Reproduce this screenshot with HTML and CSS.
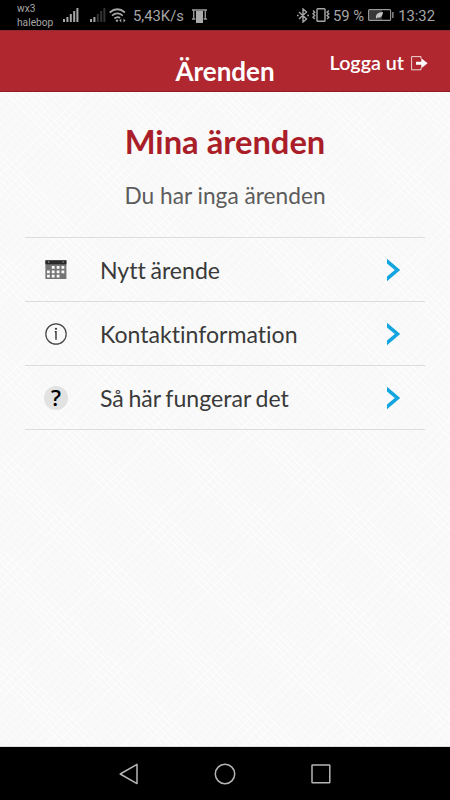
FILE: index.html
```
<!DOCTYPE html>
<html lang="sv">
<head>
    <meta charset="UTF-8" />
    <meta name="viewport" content="width=device-width, initial-scale=1" />
    <title>Ärenden</title>
    <link rel="stylesheet" href="styles.css">
</head>
<body>

<div class="statusbar">
    <div class="carrier">wx3<br>halebop</div>
    <svg class="signal" width="16" height="14" viewBox="0 0 16 14" fill="#a6a6a6">
        <path d="M0 11h2v3H0zM3.4 9h2v5h-2zM6.8 6h2v8h-2zM10.2 3h2v11h-2zM13.4 0h2v14h-2z" />
    </svg>
    <svg class="signal second" width="16" height="14" viewBox="0 0 16 14" fill="#333">
        <path fill="#a6a6a6" d="M0 11h2v3H0zM3.4 9h2v5h-2z" />
        <path d="M6.8 6h2v8h-2zM10.2 3h2v11h-2zM13.4 0h2v14h-2z" />
    </svg>
    <svg class="wifi" width="17" height="15" viewBox="0 0 17 15" fill="none" stroke="#a6a6a6" stroke-width="1.7">
        <path d="M.7 4.5Q8.3-2 16 4.5M3 7.6q5.3-4.4 10.8 0M5.4 10.5q3-2.5 5.8-.5" />
        <circle cx="8" cy="12.6" r="1.2" fill="#a6a6a6" stroke="none" />
        <path stroke="none" fill="#a6a6a6" d="M10.3 12.5l2-2v4zM16.5 12.5l-2-2v4z" />
    </svg>
    <span class="speed">5,43K/s</span>
    <svg class="cleaner" width="15" height="14" viewBox="0 0 15 14">
        <path d="M0 0h15v2H0z" fill="#777" />
        <path d="M1.7 1v9M0 10h3.4M13.3 1v9M11.6 10H15" fill="none" stroke="#969696" stroke-width="1.4" />
        <path d="M4 2h7v12H4z" fill="#aaa" />
    </svg>
    <div class="status-right">
        <svg class="bluetooth" width="12" height="15" viewBox="0 0 12 15" fill="none" stroke="#a6a6a6" stroke-width="1.4">
            <path d="M2 4l7.5 7L6 14V1l3.5 3L2 11M0 7.5h1.7M10.3 7.5H12" />
        </svg>
        <svg class="vibrate" width="18" height="14" viewBox="0 0 18 14" fill="none" stroke="#a6a6a6" stroke-width="1.4">
            <rect x="5" y=".7" width="8" height="12.6" rx=".8" />
            <path d="M1 2.5l1.7 1.7L1 5.8l1.7 1.7L1 9.2l1.7 1.7M16.8 2.5l-1.7 1.7 1.7 1.6-1.7 1.7 1.7 1.7-1.7 1.7" />
        </svg>
        <span class="percent">59 %</span>
        <svg class="battery" width="26" height="12" viewBox="0 0 26 12">
            <rect x="1" y="1.2" width="13" height="9.6" fill="#383838" />
            <rect x=".6" y=".6" width="22" height="10.8" rx="1" fill="none" stroke="#999" stroke-width="1.1" />
            <path d="M24.2 3h1.3v6h-1.3z" fill="#999" />
            <path d="M8 9c-.4-4 2-5.5 7-6-.2 4-2.4 6.3-5.5 5.5L8 9.7z" fill="#c4c4c4" />
        </svg>
        <span class="clock">13:32</span>
    </div>
</div>

<header class="header">
    <h1>Ärenden</h1>
    <a class="logout">Logga ut
        <svg width="17" height="15" viewBox="0 0 17 15">
            <path d="M10 .6H.6v13.2H10v-2M10 .6v2" fill="none" stroke="#fff" stroke-opacity=".8" />
            <path d="M5 5.7h5.3V2.2L16.6 7.3l-6.3 5V8.8H5z" fill="#fff" />
        </svg>
    </a>
</header>

<main class="content">
    <h2>Mina ärenden</h2>
    <p class="empty">Du har inga ärenden</p>

    <ul class="menu">
        <li>
            <svg class="icon" width="24" height="24" viewBox="0 0 24 24">
                <path d="M1.4 2.3h21v18.7h-21z" fill="#757575" />
                <path d="M1.4 2.3h21v4h-21z" fill="#292929" />
                <path d="M4 3.6h1.3v1H4zM18.5 3.6h1.3v1h-1.3z" fill="#bbb" />
                <path d="M7.8 8h2.8v2.8H7.8zM12.7 8h2.8v2.8h-2.8zM17.5 8h2.8v2.8h-2.8zM3 12.4h2.8v2.8H3zM7.8 12.4h2.8v2.8H7.8zM12.7 12.4h2.8v2.8h-2.8zM17.5 12.4h2.8v2.8h-2.8zM3 16.7h2.8v2.8H3zM7.8 16.7h2.8v2.8H7.8zM12.7 16.7h2.8v2.8h-2.8z" fill="#fafafa" />
            </svg>
            <span class="label">Nytt ärende</span>
            <svg class="arrow" width="14" height="24" viewBox="0 0 14 24"><path d="M0 .8L13.2 12 0 23.2v-4.6L7.8 12 0 5.4z" /></svg>
        </li>
        <li>
            <svg class="icon" width="24" height="24" viewBox="0 0 24 24">
                <circle cx="12" cy="12" r="10.2" fill="none" stroke="#444" stroke-width="1.2" />
                <circle cx="12" cy="6.8" r="1.1" fill="#333" />
                <path d="M10.8 9.7H12v8" fill="none" stroke="#333" stroke-width="1.4" />
            </svg>
            <span class="label">Kontaktinformation</span>
            <svg class="arrow" width="14" height="24" viewBox="0 0 14 24"><path d="M0 .8L13.2 12 0 23.2v-4.6L7.8 12 0 5.4z" /></svg>
        </li>
        <li>
            <span class="icon help">?</span>
            <span class="label">Så här fungerar det</span>
            <svg class="arrow" width="14" height="24" viewBox="0 0 14 24"><path d="M0 .8L13.2 12 0 23.2v-4.6L7.8 12 0 5.4z" /></svg>
        </li>
    </ul>
</main>

<nav class="navbar">
    <svg width="22" height="22" viewBox="0 0 22 22"><path d="M19 1.4v19.2L2.2 11z" /></svg>
    <svg width="22" height="22" viewBox="0 0 22 22"><circle cx="11" cy="11" r="9.7" /></svg>
    <svg width="22" height="22" viewBox="0 0 22 22"><rect x="2" y="2" width="17.8" height="17.8" rx=".5" /></svg>
</nav>

</body>
</html>
```

FILE: styles.css
```
* {
    box-sizing: border-box;
}
body {
    margin: 0;
    height: 800px;
    display: flex;
    flex-direction: column;
    overflow: hidden;
    font-family: Lato, sans-serif;
    font-variant-ligatures: none;
    background: #000;
    color: #3a3a3a;
}
svg {
    display: block;
    flex: none;
}
.statusbar {
    height: 30px;
    display: flex;
    align-items: center;
    padding: 0 15px 0 17px;
    font-family: Roboto, sans-serif;
    font-size: 14.8px;
    color: #a6a6a6;
    white-space: nowrap;
}
.carrier {
    width: 46px;
    padding-top: 1px;
    font-size: 10.2px;
    line-height: 14px;
}
.second {
    margin-left: 11px;
}
.wifi {
    margin-left: 3px;
}
.speed {
    margin-left: 7px;
    padding-top: 2px;
}
.cleaner {
    margin: 2px 0 0 8px;
}
.status-right {
    margin-left: auto;
    display: flex;
    align-items: center;
}
.vibrate {
    margin-left: 3px;
}
.percent {
    margin-left: 3px;
    padding-top: 2px;
}
.battery {
    margin-left: 4px;
}
.clock {
    margin-left: 4px;
    padding-top: 2px;
}
.header {
    position: relative;
    height: 62px;
    background: #b0272f;
    border-top: 1px solid #8e2a30;
    border-bottom: 1px solid #8f1d25;
    color: #fff;
}
h1 {
    margin: 0;
    padding-top: 24px;
    font-size: 26px;
    line-height: 32px;
    text-align: center;
}
.logout {
    position: absolute;
    top: 20px;
    right: 22px;
    display: flex;
    align-items: center;
    gap: 7px;
    font-size: 19.7px;
    font-weight: 600;
    line-height: 24px;
}
.content {
    flex: 1;
    padding: 29px 25px 0;
    border-bottom: 1px solid #ddd;
    background-color: #f8f8f8;
    background-image:
        repeating-linear-gradient(45deg, rgba(255, 255, 255, 0.5) 0 1px, transparent 1px 5px),
        repeating-linear-gradient(-45deg, rgba(255, 255, 255, 0.5) 0 1px, transparent 1px 7px);
}
h2 {
    margin: 0;
    font-size: 32.7px;
    line-height: 42px;
    text-align: center;
    color: #a91e29;
}
.empty {
    margin: 19px 0 27px;
    font-size: 22.7px;
    line-height: 28px;
    text-align: center;
    color: #5c5c5c;
}
.menu {
    list-style: none;
    margin: 0;
    padding: 0;
    border-top: 1px solid #ddd;
}
.menu li {
    height: 64px;
    display: flex;
    align-items: center;
    padding: 0 25px 0 19px;
    border-bottom: 1px solid #ddd;
}
.icon {
    width: 24px;
    height: 24px;
}
.help {
    border-radius: 50%;
    background: #e2e2e2;
    color: #000;
    font-family: "Open Sans", sans-serif;
    font-size: 22px;
    font-weight: 600;
    line-height: 23px;
    text-align: center;
}
.label {
    flex: 1;
    margin-left: 32px;
    font-size: 23.1px;
    line-height: 28px;
    word-spacing: -1.3px;
}
.arrow {
    margin-right: -1px;
    fill: #14a4e0;
}
.navbar {
    height: 53px;
    display: flex;
    justify-content: center;
    align-items: center;
    gap: 74px;
    fill: none;
    stroke: #b5b5b5;
    stroke-width: 1.5;
    stroke-linejoin: round;
}
```
